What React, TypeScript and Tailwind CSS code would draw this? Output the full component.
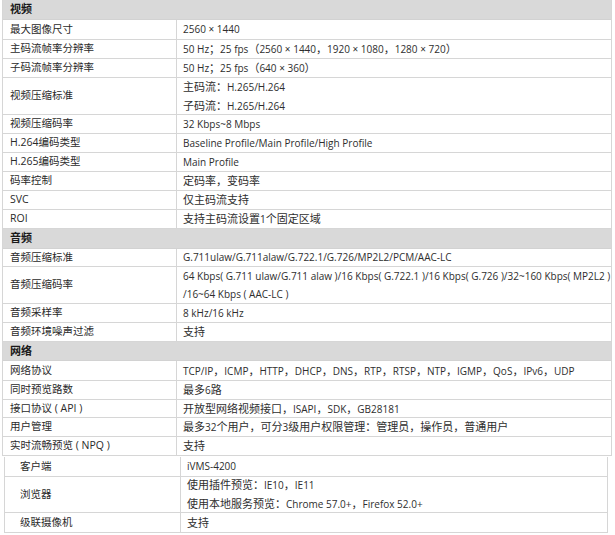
type Row = {
	label?: string;
	lines: string[];
	h: string;
	head?: boolean;
};

const upper: Row[] = [
	{ label: "视频", lines: [], h: "h-[20px]", head: true },
	{ label: "最大图像尺寸", lines: ["2560 × 1440"], h: "h-[20px]" },
	{
		label: "主码流帧率分辨率",
		lines: ["50 Hz；25 fps（2560 × 1440，1920 × 1080，1280 × 720）"],
		h: "h-[19px]",
	},
	{
		label: "子码流帧率分辨率",
		lines: ["50 Hz；25 fps（640 × 360）"],
		h: "h-[19px]",
	},
	{
		label: "视频压缩标准",
		lines: ["主码流：H.265/H.264", "子码流：H.265/H.264"],
		h: "h-[37px]",
	},
	{ label: "视频压缩码率", lines: ["32 Kbps~8 Mbps"], h: "h-[19px]" },
	{
		label: "H.264编码类型",
		lines: ["Baseline Profile/Main Profile/High Profile"],
		h: "h-[19px]",
	},
	{ label: "H.265编码类型", lines: ["Main Profile"], h: "h-[19px]" },
	{ label: "码率控制", lines: ["定码率，变码率"], h: "h-[19px]" },
	{ label: "SVC", lines: ["仅主码流支持"], h: "h-[19px]" },
	{ label: "ROI", lines: ["支持主码流设置1个固定区域"], h: "h-[19px]" },
	{ label: "音频", lines: [], h: "h-[20px]", head: true },
	{
		label: "音频压缩标准",
		lines: ["G.711ulaw/G.711alaw/G.722.1/G.726/MP2L2/PCM/AAC-LC"],
		h: "h-[18px]",
	},
	{
		label: "音频压缩码率",
		lines: [
			"64 Kbps( G.711 ulaw/G.711 alaw )/16 Kbps( G.722.1 )/16 Kbps( G.726 )/32~160 Kbps( MP2L2 )",
			"/16~64 Kbps ( AAC-LC )",
		],
		h: "h-[37px]",
	},
	{ label: "音频采样率", lines: ["8 kHz/16 kHz"], h: "h-[19px]" },
	{ label: "音频环境噪声过滤", lines: ["支持"], h: "h-[19px]" },
	{ label: "网络", lines: [], h: "h-[19px]", head: true },
	{
		label: "网络协议",
		lines: [
			"TCP/IP，ICMP，HTTP，DHCP，DNS，RTP，RTSP，NTP，IGMP，QoS，IPv6，UDP",
		],
		h: "h-[20px]",
	},
	{ label: "同时预览路数", lines: ["最多6路"], h: "h-[19px]" },
	{
		label: "接口协议 ( API )",
		lines: ["开放型网络视频接口，ISAPI，SDK，GB28181"],
		h: "h-[18px]",
	},
	{
		label: "用户管理",
		lines: ["最多32个用户，可分3级用户权限管理：管理员，操作员，普通用户"],
		h: "h-[19px]",
	},
	{ label: "实时流畅预览 ( NPQ )", lines: ["支持"], h: "h-[19px]" },
];

const lower: Row[] = [
	{ label: "客户端", lines: ["iVMS-4200"], h: "h-[20px]" },
	{
		label: "浏览器",
		lines: [
			"使用插件预览：IE10，IE11",
			"使用本地服务预览：Chrome 57.0+，Firefox 52.0+",
		],
		h: "h-[36px]",
	},
	{ label: "级联摄像机", lines: ["支持"], h: "h-[20px]" },
];

const font = {
	fontFamily: '"Open Sans", "Noto Sans CJK SC", sans-serif',
};

// CJK runs render a touch larger than the latin text, like the source doc
function Mixed({ text }: { text: string }) {
	const parts = text.split(/([\u3000-\u303f\u4e00-\u9fff\uff00-\uffef]+)/);
	return (
		<>
			{parts.map((p, i) =>
				i % 2 === 1 ? (
					<span key={i} className="text-[11px]">
						{p}
					</span>
				) : (
					<span key={i}>{p}</span>
				),
			)}
		</>
	);
}

function SpecRow({
	row,
	split,
	pad,
}: {
	row: Row;
	split: string;
	pad: string;
}) {
	if (row.head) {
		return (
			<div
				className={`${row.h} flex items-center bg-[#d9d9d9] border-b border-[#d2d2d2] pl-[7px] text-[11px] font-bold text-[#1a1a1a]`}
			>
				{row.label}
			</div>
		);
	}
	return (
		<div className={`${row.h} grid ${split} border-b border-[#d6d6d6]`}>
			<div
				className={`flex items-center border-r border-[#d6d6d6] ${pad} text-[10.5px] text-[#2a2a2a]`}
			>
				{row.label}
			</div>
			<div className="flex flex-col justify-center gap-[3px] pl-[6px] text-[10px] leading-[15px] text-[#2e2e2e]">
				{row.lines.map((l) => (
					<div key={l} className="whitespace-nowrap">
						<Mixed text={l} />
					</div>
				))}
			</div>
		</div>
	);
}

export default function App() {
	return (
		<div className="h-[535px] w-[615px] bg-white" style={font}>
			<div className="ml-[2px] w-[610px] border-x border-[#d6d6d6]">
				{upper.map((r) => (
					<SpecRow
						key={r.label}
						row={r}
						split="grid-cols-[174px_1fr]"
						pad="pl-[7px]"
					/>
				))}
			</div>
			<div className="ml-[4px] mt-px w-[604px] border-x border-[#d6d6d6]">
				{lower.map((r) => (
					<SpecRow
						key={r.label}
						row={r}
						split="grid-cols-[176px_1fr]"
						pad="pl-[15px]"
					/>
				))}
			</div>
		</div>
	);
}
